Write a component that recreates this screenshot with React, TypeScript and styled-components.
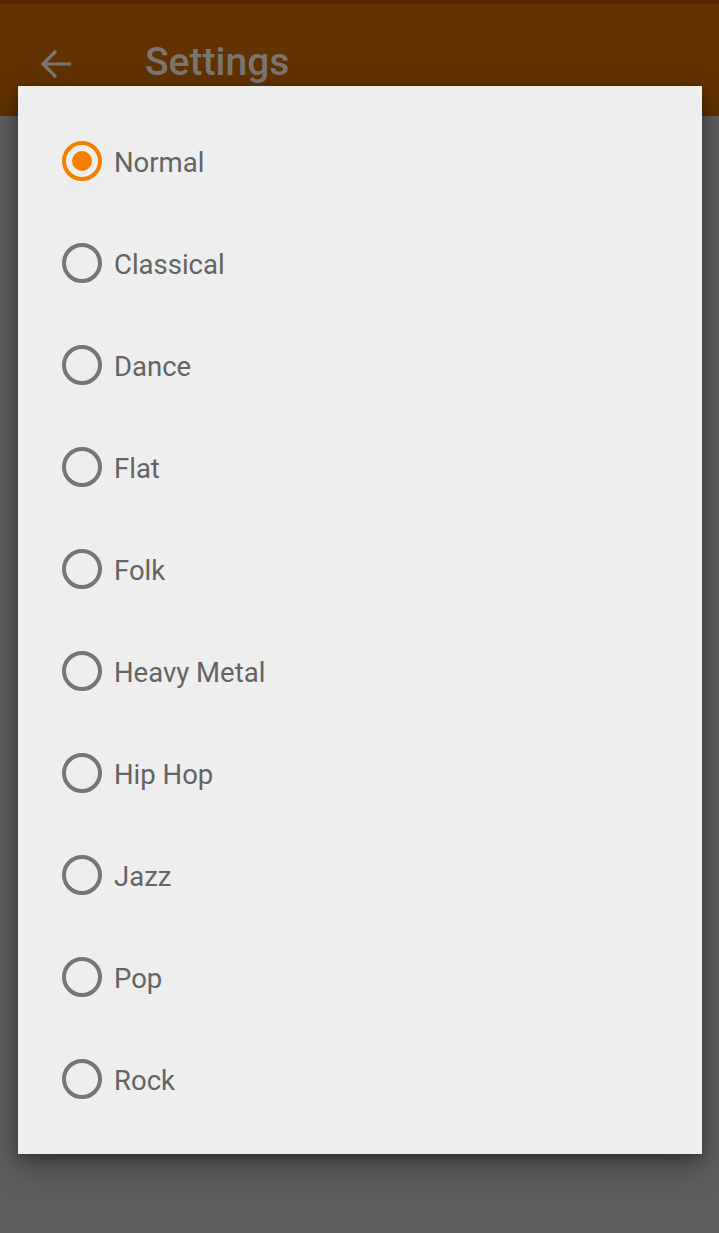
import React from "react";
import styled, { createGlobalStyle } from "styled-components";

const Global = createGlobalStyle`
  html, body { margin: 0; padding: 0; background: #5e5e5e; }
  body { font-family: Roboto, "Noto Sans", Arial, sans-serif; }
`;

const Screen = styled.div`
  position: relative;
  width: 719px;
  height: 1233px;
  background: #5e5e5e;
  overflow: hidden;
`;

const StatusBar = styled.div`
  height: 4px;
  background: #532900;
`;

const Toolbar = styled.div`
  height: 112px;
  background: #623200;
  display: flex;
  align-items: flex-start;
  padding-top: 40px;
  box-sizing: border-box;
`;

const BackButton = styled.div`
  width: 32px;
  height: 32px;
  margin-left: 40px;
  margin-top: 4px;
  display: flex;
`;

const Title = styled.div`
  margin-left: 73px;
  margin-top: -4px;
  font-size: 39px;
  font-weight: 500;
  color: #7b7673;
  line-height: 44px;
`;

const Dialog = styled.div`
  position: absolute;
  left: 18px;
  top: 86px;
  width: 684px;
  height: 1068px;
  background: #eeeeee;
  box-shadow: 0 12px 30px rgba(0, 0, 0, 0.35), 0 4px 10px rgba(0, 0, 0, 0.25);
  padding-top: 24px;
  box-sizing: border-box;
  display: flex;
  flex-direction: column;
`;

const List = styled.div`
  display: flex;
  flex-direction: column;
`;

const Item = styled.div`
  height: 102px;
  display: flex;
  align-items: center;
  padding-left: 44px;
`;

const Label = styled.span`
  margin-left: 12px;
  margin-top: 2px;
  font-size: 27.5px;
  color: #646464;
`;

const Radio = ({ checked }: { checked: boolean }) => (
  <svg width="40" height="40" viewBox="0 0 40 40">
    <circle
      cx="20"
      cy="20"
      r="18"
      fill="none"
      stroke={checked ? "#f57f00" : "#767676"}
      strokeWidth="4"
    />
    {checked && <circle cx="20" cy="20" r="10" fill="#f57f00" />}
  </svg>
);

const items = [
  "Normal",
  "Classical",
  "Dance",
  "Flat",
  "Folk",
  "Heavy Metal",
  "Hip Hop",
  "Jazz",
  "Pop",
  "Rock",
];

export default function App() {
  return (
    <Screen>
      <Global />
      <StatusBar />
      <Toolbar>
        <BackButton>
          <svg width="32" height="32" viewBox="0 0 32 32">
            <path
              d="M31 16 H3 M16 3 L3 16 L16 29"
              fill="none"
              stroke="#7b7673"
              strokeWidth="3.2"
            />
          </svg>
        </BackButton>
        <Title>Settings</Title>
      </Toolbar>
      <Dialog>
        <List>
          {items.map((it, i) => (
            <Item key={it}>
              <Radio checked={i === 0} />
              <Label>{it}</Label>
            </Item>
          ))}
        </List>
      </Dialog>
    </Screen>
  );
}
